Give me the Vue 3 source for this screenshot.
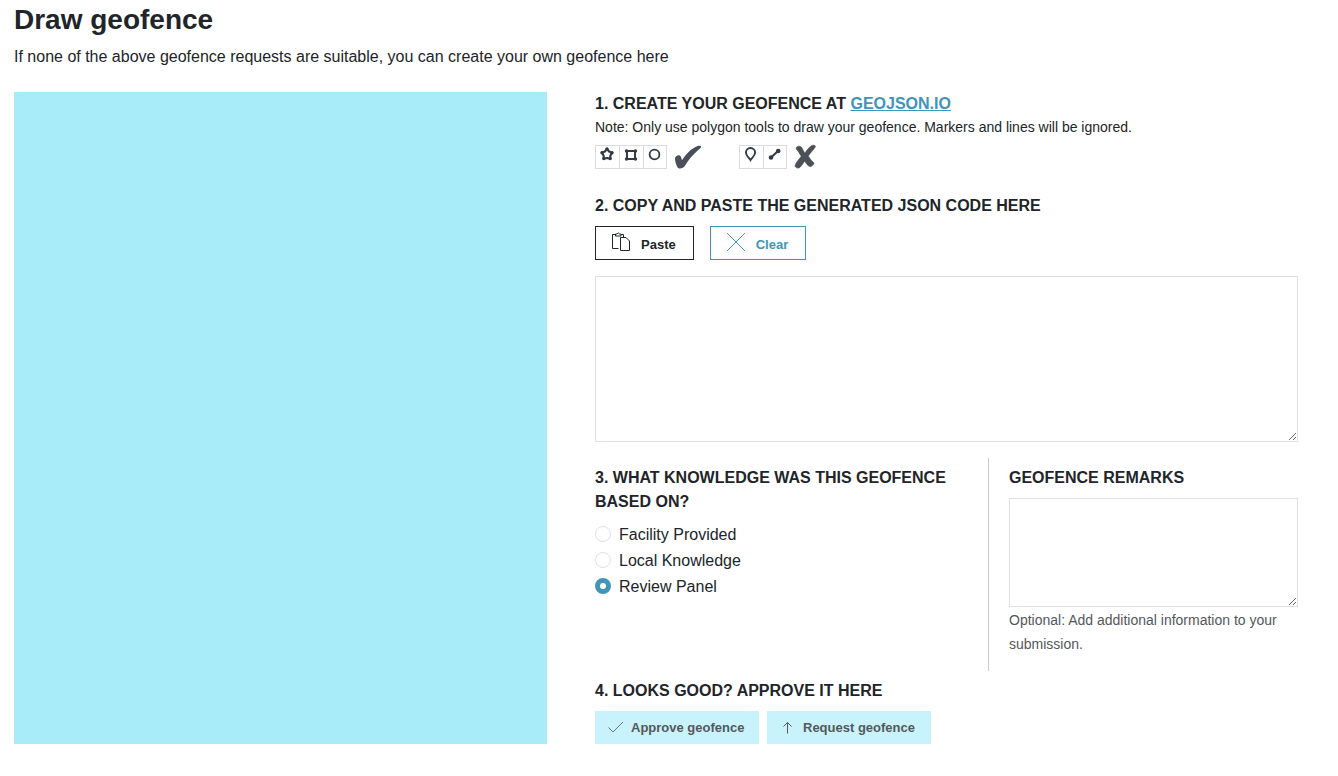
<script setup>
import { ref } from 'vue'

const geojson = ref('')
const remarks = ref('')
const basis = ref('panel')
const options = [
  { value: 'facility', label: 'Facility Provided' },
  { value: 'local', label: 'Local Knowledge' },
  { value: 'panel', label: 'Review Panel' },
]

async function paste() {
  geojson.value = await navigator.clipboard.readText()
}
</script>

<template>
  <main class="page">
    <h1>Draw geofence</h1>
    <p class="intro">If none of the above geofence requests are suitable, you can create your own geofence here</p>

    <div class="columns">
      <div class="map"></div>

      <div class="steps">
        <section>
          <h2>1. Create your geofence at <a href="#geojson">geojson.io</a></h2>
          <p class="note">Note: Only use polygon tools to draw your geofence. Markers and lines will be ignored.</p>
          <div class="tools">
            <div class="toolset">
              <span class="tool">
                <svg width="22" height="22" viewBox="0 0 22 22">
                  <path d="M11 2.900 L13.100 5.500 L16.200 6.700 L14.400 9.500 L14.200 12.800 L11 12 L7.800 12.800 L7.600 9.500 L5.800 6.700 L8.900 5.500 Z" fill="none" stroke="#333b44" stroke-width="2.200" stroke-linejoin="round" />
                  <g fill="#333b44"><circle cx="11" cy="3" r="1.700" /><circle cx="16" cy="6.800" r="1.700" /><circle cx="14.200" cy="12.600" r="1.700" /><circle cx="7.800" cy="12.600" r="1.700" /><circle cx="6" cy="6.800" r="1.700" /></g>
                </svg>
              </span>
              <span class="tool">
                <svg width="22" height="22" viewBox="0 0 22 22">
                  <rect x="7" y="5" width="8" height="8" fill="none" stroke="#333b44" stroke-width="2" />
                  <g fill="#333b44"><circle cx="6.600" cy="5" r="1.800" /><circle cx="15.400" cy="5" r="1.800" /><circle cx="6.600" cy="13" r="1.800" /><circle cx="15.400" cy="13" r="1.800" /></g>
                </svg>
              </span>
              <span class="tool">
                <svg width="22" height="22" viewBox="0 0 22 22">
                  <circle cx="10.500" cy="8.500" r="4.900" fill="none" stroke="#333b44" stroke-width="1.800" />
                </svg>
              </span>
            </div>
            <svg class="mark" width="28" height="26" viewBox="0 0 28 26" role="img" aria-label="Allowed">
              <path d="M1 14.500 C1.200 11.500 5.500 9.800 6.800 12.600 L8 16.200 C12.500 9.500 18 4.200 23.500 2.100 C25 1.500 27.400 1.300 27 2.900 C26.800 4 25.500 4.800 24.500 5.800 C19 10.500 14.500 16 10.800 22 C9.500 24.300 5 25.300 3.600 23.400 C2.300 21 1 17.500 1 14.500 Z" fill="#495057" />
            </svg>
            <div class="toolset second">
              <span class="tool">
                <svg width="22" height="22" viewBox="0 0 22 22">
                  <path d="M10.500 14 C9.300 11.800 5.900 10 5.900 6.600 A4.600 4.600 0 0 1 15.100 6.600 C15.100 10 11.700 11.800 10.500 14 Z" fill="none" stroke="#333b44" stroke-width="1.900" />
                </svg>
              </span>
              <span class="tool">
                <svg width="22" height="22" viewBox="0 0 22 22">
                  <path d="M7 11.500 L14 5" stroke="#333b44" stroke-width="2" />
                  <circle cx="7" cy="11.500" r="2.300" fill="#333b44" /><circle cx="14.200" cy="5" r="2.300" fill="#333b44" />
                </svg>
              </span>
            </div>
            <svg class="mark" width="24" height="26" viewBox="1 0 24 26" role="img" aria-label="Not allowed">
              <path d="M3.200 3.500 C5 1.600 8 1.800 9 4 L11.800 9.300 C13.600 6.500 15.600 3.800 18 1.900 C19.500 .8 23.300 1 22.300 3 C20.500 5.800 17.500 8.800 15.300 12 C16.800 14.500 18.500 16.800 20.700 18.600 C21.800 20 18.700 23 16.800 22.600 C14.800 21.800 13.100 19.400 11.600 17 C10.100 19.400 8.700 21.800 6.900 23.400 C5.100 25 1.500 23.600 2.100 21.300 C3.200 18.200 5.900 15.300 8.200 12.300 C6.500 9.500 5.100 6.800 3.300 5.200 Z" fill="#495057" stroke="#495057" stroke-width=".6" />
            </svg>
          </div>
        </section>

        <section class="copy">
          <h2><label for="json">2. Copy and paste the generated JSON code here</label></h2>
          <div class="buttons">
            <button type="button" class="btn dark" @click="paste">
              <svg width="20" height="20" viewBox="0 0 20 20" fill="none" stroke="currentColor">
                <path d="M7.500 16.500 H1.500 V2.500 H4 M10 2.500 H12.500 V5 M4.500 4 V2 H6 Q7.200 -.2 8.500 2 H10 V4 Z M9.500 5.500 H15 L18.500 9 V18.500 H9.500 Z" />
              </svg>
              Paste
            </button>
            <button type="button" class="btn blue" @click="geojson = ''">
              <svg width="20" height="20" viewBox="0 0 20 20" fill="none" stroke="currentColor">
                <path d="M1 1 L19 19 M19 1 L1 19" />
              </svg>
              Clear
            </button>
          </div>
          <textarea id="json" v-model="geojson" class="json"></textarea>
        </section>

        <div class="details">
          <fieldset>
            <legend>3. What knowledge was this geofence based on?</legend>
            <label v-for="o in options" :key="o.value" class="option">
              <input v-model="basis" type="radio" name="basis" :value="o.value" />
              {{ o.label }}
            </label>
          </fieldset>
          <section class="remarks">
            <h2><label for="remarks">Geofence remarks</label></h2>
            <textarea id="remarks" v-model="remarks" aria-describedby="remarks-help"></textarea>
            <p id="remarks-help" class="help">Optional: Add additional information to your submission.</p>
          </section>
        </div>

        <section class="approve">
          <h2>4. Looks good? Approve it here</h2>
          <div class="actions">
            <button type="button" class="action" disabled>
              <svg width="16" height="16" viewBox="0 0 16 16" fill="none" stroke="currentColor" stroke-width=".8">
                <path d="M.5 7.500 L5 12 L15 2" />
              </svg>
              Approve geofence
            </button>
            <button type="button" class="action" disabled>
              <svg width="16" height="16" viewBox="0 0 16 16" fill="none" stroke="currentColor">
                <path d="M7.500 13.500 V2.500 M3.500 6.500 L7.500 2.500 L11.500 6.500" />
              </svg>
              Request geofence
            </button>
          </div>
        </section>
      </div>
    </div>
  </main>
</template>

<style>
body {
  margin: 0;
  background: #fff;
}
</style>

<style scoped>
* {
  box-sizing: border-box;
}
.page {
  padding: 3px 40px 32px 14px;
  font: 16px/24px "Liberation Sans", Arial, sans-serif;
  color: #212529;
}
h1, h2, p, fieldset, legend {
  margin: 0;
  padding: 0;
}
h1 {
  font-size: 28px;
  line-height: 34px;
}
.page .intro {
  margin-top: 8px;
}
.columns {
  display: grid;
  grid-template-columns: 533fr 703fr;
  gap: 48px;
  margin-top: 23px;
}
.map {
  background: #a8ecfa;
}
h2, legend {
  font-size: 16px;
  line-height: 24px;
  font-weight: 700;
  text-transform: uppercase;
}
a {
  color: #4195b9;
}
.note, .help {
  font-size: 14px;
}
.note {
  line-height: 22px;
}
.tools {
  display: flex;
  align-items: center;
  margin-top: 6px;
}
.toolset {
  display: flex;
  height: 24px;
  border: solid #dcdcdc;
  border-width: 1px 1px 1px 0;
}
.second {
  margin-left: 37px;
}
.tool {
  width: 24px;
  border-left: 1px solid #dcdcdc;
}
.tool:last-child {
  width: 23px;
}
.tool svg {
  display: block;
}
.mark {
  margin-left: 7px;
}
.copy {
  margin-top: 24px;
}
.buttons {
  display: flex;
  gap: 16px;
  margin: 8px 0 16px;
}
button {
  display: flex;
  align-items: center;
  font: 700 13px/20px "Liberation Sans", Arial, sans-serif;
}
.btn {
  gap: 10px;
  height: 34px;
  padding: 3px 17px 0 15px;
  background: #fff;
  border: 1px solid;
}
.btn svg {
  margin-bottom: 5px;
}
.dark {
  color: #212529;
}
.blue {
  color: #4195b9;
}
textarea {
  display: block;
  width: 100%;
  height: 109px;
  padding: 6px 12px;
  border: 1px solid #dee2e6;
  background: #fff;
  font: inherit;
  color: inherit;
  resize: both;
}
.json {
  height: 166px;
}
.details {
  display: grid;
  grid-template-columns: 393fr 310fr;
  margin-top: 16px;
}
fieldset {
  border: 0;
  min-width: 0;
  padding: 8px 24px 0 0;
}
legend {
  float: left;
  width: 100%;
  margin-bottom: 8px;
}
.option {
  display: flex;
  clear: both;
  align-items: center;
  gap: 8px;
  height: 26px;
}
input {
  appearance: none;
  width: 16px;
  height: 16px;
  margin: 0 0 2px;
  border: 1px solid #dee2e6;
  border-radius: 50%;
  background: #fff;
}
input:checked {
  border: 5px solid #4195b9;
}
.remarks {
  padding: 8px 0 15px 20px;
  border-left: 1px solid #ccc;
}
.remarks textarea {
  margin: 8px 0 1px;
}
.help {
  color: #54585b;
}
.approve {
  margin-top: 8px;
}
.actions {
  display: flex;
  gap: 8px;
  margin-top: 8px;
}
.action {
  gap: 7px;
  min-width: 164px;
  height: 33px;
  padding: 0 13px;
  border: 0;
  background: #c8f3fc;
  color: #54585b;
}
</style>
